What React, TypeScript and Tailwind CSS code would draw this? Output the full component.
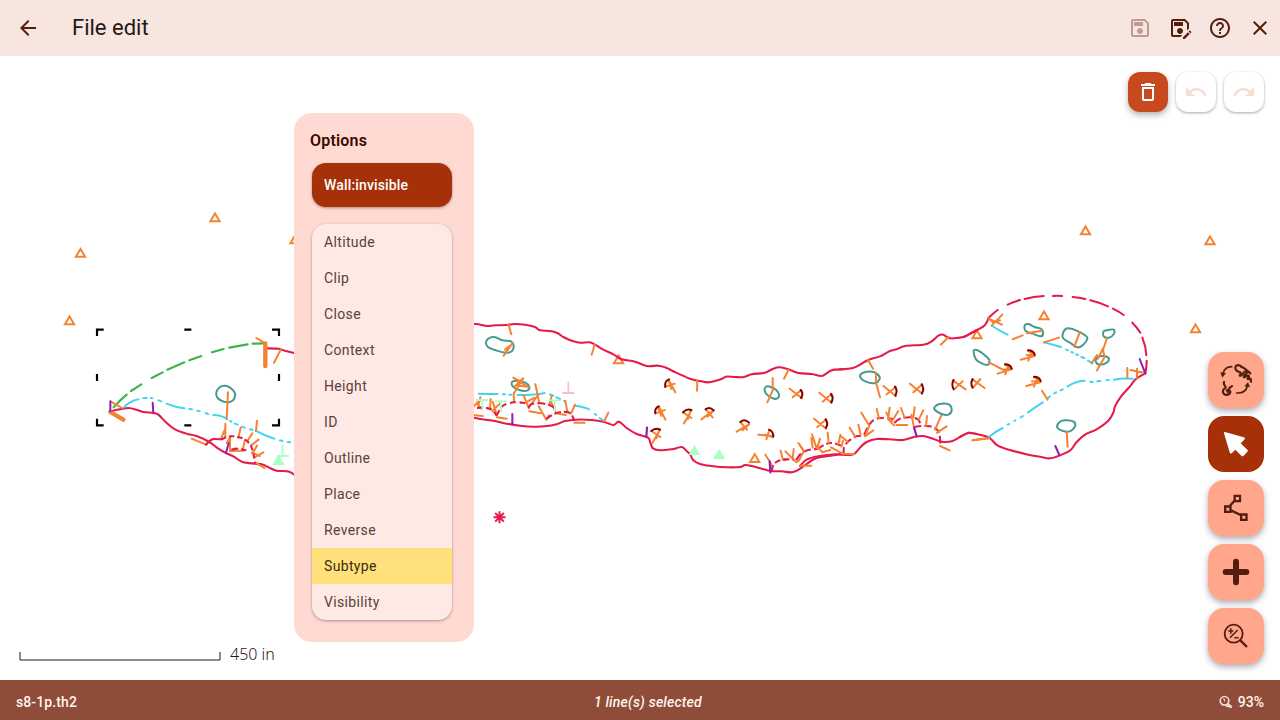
import type { ReactNode } from "react";
import {
  MdArrowBack,
  MdClose,
  MdDeleteOutline,
  MdHelpOutline,
  MdOutlineSave,
  MdOutlineSaveAs,
  MdRedo,
  MdUndo,
} from "react-icons/md";

const WALL = "#e6194b";
const ORANGE = "#f58231";
const TEAL = "#469990";
const CYAN = "#42d4f4";
const PURPLE = "#911eb4";
const MAROON = "#800000";
const MINT = "#aaffc3";
const GREEN = "#3cb44b";
const PINK = "#fabed4";

/** Catmull-Rom spline through a "x,y x,y" list, expressed as cubic beziers. */
function spline(list: string, closed = false) {
  const p = list.split(" ").map((s) => s.split(",").map(Number));
  const n = p.length;
  const at = (i: number) => (closed ? p[(i + n) % n] : p[Math.max(0, Math.min(n - 1, i))]);
  let d = `M${p[0][0]} ${p[0][1]}`;
  for (let i = 0; i < (closed ? n : n - 1); i++) {
    const [a, b, c, e] = [at(i - 1), at(i), at(i + 1), at(i + 2)];
    d += `C${b[0] + (c[0] - a[0]) / 6} ${b[1] + (c[1] - a[1]) / 6} ${c[0] - (e[0] - b[0]) / 6} ${c[1] - (e[1] - b[1]) / 6} ${c[0]} ${c[1]}`;
  }
  return closed ? d + "Z" : d;
}

type CurveProps = { pts: string; c?: string; w?: number; dash?: string; closed?: boolean };
const Curve = ({ pts, c = WALL, w = 6.2, dash, closed }: CurveProps) => (
  <path d={spline(pts, closed)} stroke={c} strokeWidth={w} strokeDasharray={dash} strokeLinecap={dash ? "butt" : "round"} />
);
const Seg = ({ d, c = ORANGE, w = 6 }: { d: string; c?: string; w?: number }) => (
  <path d={d} stroke={c} strokeWidth={w} strokeLinecap="round" strokeLinejoin="round" />
);

/** Map sheet tile: geometry is digitised at three units per pixel. */
const Sheet = ({ x, y, children }: { x: number; y: number; children: ReactNode }) => (
  <g transform={`translate(${x} ${y}) scale(0.33333)`}>{children}</g>
);

const stations = [
  [80.5, 253.5], [215, 218], [69.5, 321], [295, 240], [618.6, 360], [754.7, 458.7],
  [977, 335], [1044, 316], [1085.5, 231], [1210, 241], [1195.5, 329],
];

function CaveMap() {
  return (
    <svg className="block h-full w-full" viewBox="0 56 1280 624" fill="none">
      <g stroke={ORANGE} strokeWidth="2">
        {stations.map(([x, y]) => (
          <path key={x} d={`M${x} ${y - 4.6}L${x + 4.6} ${y + 3.2}H${x - 4.6}Z`} />
        ))}
      </g>

      <Sheet x={0} y={180}>
        <Curve pts="331,694 360,688 385,684 410,689 430,696 460,699 475,704 500,729 525,748 560,761 590,768 628,786 655,806 678,819 700,829 728,846 765,851 785,853 810,864 830,872 868,875 890,890" />
        <Curve pts="796,505 835,506 850,511 890,521" />
        <Seg c={CYAN} d="M372 682Q390 663 415 658M430 654H440M452 654L457 655M475 661L484 664M500 671Q525 682 553 685M568 687L576 688M592 692L599 694M617 699L624 702M640 705Q665 705 682 718M690 723L694 725M704 731L713 734M726 740L734 743M750 748L758 750M768 753Q795 768 823 776M840 781L847 783M863 786L871 787" />
        <Seg c={GREEN} w={6.4} d="M341 682Q360 660 380 644M393 633L424 613M455 594L488 577M502 569L553 547M568 541L604 528M636 517L671 507M688 503L743 493M758 491L795 490" />
        <Curve c={TEAL} w={6} closed pts="660,621 676,617 690,623 703,636 705,648 700,660 684,667 666,663 652,653 649,637" />
        <Seg d="M684 637L680 714M333 665L366 684M769 474L792 488M843 508L822 548M575 776L618 794L628 784M771 722L768 753M722 743L715 773M676 731L676 770M662 778L675 748M735 779L728 809M692 769L680 789M690 770L690 813L730 812M757 760L742 783M776 779L753 796M771 797L760 817M790 817L766 831M755 818L779 828M767 848L793 864" />
        <Seg w={13} d="M331 696L370 719M796 490L796 558" />
        <Seg c={PURPLE} w={6} d="M331 694V664M458 668L460 699M678 819L686 789" />
        <Curve pts="618,794 630,782 642,777 662,778" />
        <Curve pts="664,779 680,771 705,769 732,777 751,794 760,820 765,851" dash="16 9" />
        <Curve pts="694,809 711,806 739,811" dash="22 8" />
        <Seg c={MINT} w={5.4} d="M848 797V828M833 828H865" />
        <path d="M835 823L854 855H817Z" fill={MINT} />
        <g stroke="#000" strokeWidth="6.5">
          <path d="M291 468V449H311M816 449H837V468M291 716V736H311M816 736H837V716M553 449H574M553 736H574M291 582V603M837 582V603" />
        </g>
      </Sheet>

      <Sheet x={470} y={300}>
        <Curve pts="0,70 25,73 50,78 75,76 110,75 132,72 165,74 195,81 210,91 240,93 262,99 280,111 305,122 330,128 358,127 375,134 400,149 430,163 455,178 495,185 530,198 565,197 585,202 610,214" />
        <Curve pts="0,350 35,358 70,362 110,371 150,377 190,380 225,379 260,373 285,363 320,359 365,360 400,365 430,375 447,365 470,384 500,402 534,413 541,428 549,445 570,451 612,447" />
        <Curve c={TEAL} w={6} closed pts="62,112 77,112 97,121 123,124 131,137 126,153 110,158 78,151 53,140 49,123" />
        <Curve c={TEAL} w={6} closed pts="126,246 142,242 166,248 178,261 171,272 150,271 129,260" />
        <Seg c={CYAN} d="M-10 282H5M26 281Q55 283 83 282M99 283H105M118 284H124M142 285Q190 286 224 279M240 283L250 287M259 292L270 297M282 303L287 304M314 317Q342 320 357 328M374 342L379 345M389 354L397 359" />
        <Seg d="M115 73L124 103M128 129L101 167M127 132L105 149M374 134L365 164M415 338L403 363M315 314L303 341M313 368H344M130 233L176 262M160 235L131 281L132 306M145 240L143 258M135 258L158 236M146 257L174 260M196 253L208 309M205 284L176 323M161 286L170 309M192 294L165 309M170 310L177 324M206 319L229 359L237 346M178 334L212 340M245 288L238 314M242 302L258 340L287 345M286 304L292 334M80 352L110 356M62 297L60 326M68 305L80 344M90 310L67 333M20 310L34 326M31 292L25 318M0 344L38 348M5 326L29 300" />
        <Curve pts="-5,331 15,325 42,323 65,329 80,347" dash="18 9" />
        <Curve pts="80,347 98,318 132,307 165,309" dash="18 11" />
        <Curve pts="175,324 185,312 215,310 245,318 262,331" dash="24 9" />
        <Curve pts="229,357 250,343 275,336 300,339 312,359" dash="20 9" />
        <Seg c={MINT} d="M20 300H52M37 300V328M77 304H108M93 304V333M238 301H270M254 301V333" w={5.4} />
        <Seg c={PINK} d="M279 279H311M295 279V248" w={5.4} />
        <Seg c={PURPLE} d="M127 342V373" w={6} />
      </Sheet>

      <Sheet x={640} y={330}>
        <Curve pts="100,124 115,131 155,148 180,153 207,157 245,147 258,140 285,141 312,141 335,133 375,128 400,116 420,112 445,118 475,129 515,132 546,138 575,121 610,118" />
        <Curve pts="102,357 125,351 139,362 151,374 160,391 180,402 220,409 260,412 300,411 315,405 335,408 365,416 392,423 425,424 455,427 472,421 500,402 525,386 560,379 600,373" />
        <Seg d="M86 150L106 187M76 170L104 161M86 153L94 177M57 229L76 269M47 250L74 240M55 235L64 258M154 242L132 280M129 247L154 264M152 242L144 267M60 299L37 339M34 303L61 321M58 300L49 325M221 241L184 268M197 238L218 262M220 243L203 260M327 283L290 305M301 276L321 299M325 285L308 301M400 319L355 314M388 300L379 328M399 322L376 314M449 176L486 205M484 180L458 202M538 188L575 218M575 191L548 215M522 266L559 296M559 268L532 291" />
        <g stroke={MAROON} strokeWidth="6" strokeLinecap="round">
          <path d="M76 171Q73 153 87 148M46 250Q43 235 56 229M129 247Q140 235 154 240M34 303Q46 292 60 299M197 238Q209 229 221 241M301 276Q314 265 327 278M387 299Q399 303 400 319M482 180Q492 192 483 204M573 192Q582 203 574 217M557 268Q566 281 558 293" />
        </g>
        <Seg d="M172 151L171 182M446 119L432 146M376 374L390 396M390 396L397 411M422 362L429 390L436 387M436 364L469 397L479 389M461 357L458 387M475 339L492 363L476 392" />
        <Curve c={TEAL} w={6} closed pts="377,171 390,170 408,179 417,193 414,204 402,206 383,196 374,182" />
        <Seg d="M398 144V181L382 217" />
        <Curve pts="395,423 401,403 420,391 445,388 460,389" dash="18 9" />
        <Curve pts="469,390 483,370 505,360 535,356" dash="24 9" />
        <Seg c={PURPLE} w={6.5} d="M21 293L19 321M389 394L391 427" />
        <path d="M163 344L181 375H146ZM237 356L256 387H219Z" fill={MINT} />
      </Sheet>

      <Sheet x={800} y={330}>
        <Curve pts="120,118 155,115 175,107 205,90 240,79 270,63 290,58 315,48 370,44 395,34 415,17 430,14 450,25 490,21 505,14 530,0" />
        <Curve pts="120,373 150,375 165,370 182,351 200,336 230,327 270,328 310,330 345,320 370,318 395,325 425,335 455,334 480,321 505,308" />
        <Curve pts="55,355 80,341 103,340 125,348" dash="18 9" />
        <Curve pts="131,373 132,352 146,333 168,319 190,316 205,288 222,269 245,264 280,267" dash="22 10" />
        <Curve pts="283,279 300,266 332,262 355,269 362,288" dash="24 9" />
        <Curve pts="342,291 365,288 390,289 410,298 419,315 421,349" dash="22 9" />
        <Curve pts="0,408 20,389 55,379 105,373 150,375" />
        <Curve c={TEAL} w={6} closed pts="183,132 200,125 221,126 239,141 233,155 219,160 196,154 182,144" />
        <Seg d="M250 168L288 198M287 171L260 193M330 161L367 191M367 163L340 187M497 178L458 151M488 154L463 177M554 174L517 148M541 147L521 171M204 90L219 116M228 128V158L240 202M446 21L422 44M426 252L405 299M184 248L208 287L195 319L220 301M230 237L237 265M269 233L264 267L282 286M259 248L270 269M295 243L275 275M303 234L314 264M289 285H322M334 254L342 291M344 232L340 262M370 241L356 269M381 258L378 288M440 289L411 308M420 348L449 361M518 331L570 324M0 346L11 363M36 313L50 355M34 324L38 353M60 326L51 355M55 352L67 367L91 360M83 308L86 339M93 352L128 371L164 372M121 314L116 339M122 318L144 336M119 333L113 342M149 293L165 319M175 284L182 315M129 333L124 350M0 407L34 407" />
        <g stroke={MAROON} strokeWidth="6" strokeLinecap="round">
          <path d="M285 170Q294 182 286 197M365 163Q374 177 366 190M461 150Q453 163 461 178M518 147Q510 160 518 173" />
        </g>
        <Curve c={TEAL} w={6} closed pts="404,231 418,222 446,223 455,240 445,254 425,252 405,240" />
        <Seg c={PURPLE} w={6.5} d="M342 292L350 319" />
      </Sheet>

      <Sheet x={960} y={280}>
        <Curve pts="10,171 25,164 52,150 75,135 86,114" />
        <Seg c={WALL} w={6.2} d="M86 113Q99 100 113 90M143 74Q161 66 180 60M194 57Q221 50 251 48M279 48Q292 46 306 48M338 51Q357 52 376 57M391 61Q419 68 444 79M459 86Q477 95 491 105M517 128Q532 143 541 158M547 173Q558 199 559 226M560 242Q560 262 556 280" />
        <Curve pts="0,470 25,459 50,462 86,472 112,496 150,510 205,524 240,530 270,535 300,526 332,510 350,486 375,464 410,448 445,422 460,398 466,377 485,347 510,319 527,298 556,280" />
        <Seg c={CYAN} d="M97 138Q121 154 143 164M252 187L303 201M318 209L324 211M334 216L339 218M349 223L354 225M364 231L373 234M384 242L397 249M87 471Q105 455 128 444M143 434L147 432M163 423L166 421M182 412L189 408M204 397L248 367M263 355L270 349M283 340L288 337M302 331L308 328M323 319Q350 302 374 302M391 305L398 306M412 304L421 303M440 301L446 300M462 299Q484 294 518 296" />
        <Curve c={TEAL} w={6} closed pts="41,212 55,212 76,227 88,240 84,254 67,251 48,238" />
        <Curve c={TEAL} w={6} closed pts="194,136 206,132 224,141 244,147 249,162 241,169 218,161 197,153" />
        <Curve c={TEAL} w={6} closed pts="323,145 356,155 382,173 369,195 352,202 333,190 309,174 311,155" />
        <Curve c={TEAL} w={6} closed pts="431,154 444,150 462,149 461,163 447,173 431,169" />
        <Curve c={TEAL} w={6} closed pts="410,234 424,228 445,233 443,246 421,254 408,247" />
        <Curve c={TEAL} w={6} closed pts="297,428 314,421 341,425 345,439 329,454 309,453 292,443" />
        <Seg d="M204 212L225 227L200 225M214 214L205 242M224 228L182 239M135 254L155 267L128 269M145 257L136 283M154 268L113 281M87 247L127 268M222 291L242 306L216 304M232 296L222 320M241 307L199 318M86 116L126 134M127 104L95 137M86 115L100 128L120 121M158 178L188 166M201 160L246 152M252 187L297 173M360 155L343 200M441 174L429 210L434 231L411 271M411 225L395 250M429 205L414 236M246 332L263 359M502 264V294M531 266V294M511 270L555 279M320 455L323 500M38 481L87 475" />
        <g stroke={MAROON} strokeWidth="6" strokeLinecap="round">
          <path d="M204 211Q220 211 224 224M135 253Q151 253 155 266M222 290Q238 290 242 303" />
        </g>
        <Seg c={PURPLE} w={6} d="M539 237L556 280M286 498L298 525" />
      </Sheet>

      <path d="M493.5 517.3H505.5M499.5 511.3V523.3M495.2 513L503.8 521.6M503.8 513L495.2 521.6" stroke={WALL} strokeWidth="2" />
    </svg>
  );
}

const options = ["Altitude", "Clip", "Close", "Context", "Height", "ID", "Outline", "Place", "Reverse", "Subtype", "Visibility"];

function OptionsPanel() {
  return (
    <div className="absolute left-[294px] top-[57px] h-[529px] w-[180px] rounded-[18px] bg-[#ffdad2] px-4 pt-4">
      <h2 className="text-[16px] font-semibold leading-6 tracking-[0.2px] text-[#3b0900]">Options</h2>
      <div className="ml-0.5 mt-[10px] flex h-11 w-[140px] items-center rounded-[14px] bg-[#a63108] px-3 text-[14px] font-medium tracking-[0.15px] text-white shadow-[0_1px_3px_rgba(0,0,0,0.35)]">
        Wall:invisible
      </div>
      <ul className="ml-0.5 mt-[17px] w-[140px] overflow-hidden rounded-[14px] bg-[#ffe9e4] shadow-[0_1px_3px_rgba(0,0,0,0.35)]">
        {options.map((o) => (
          <li
            key={o}
            className={`flex h-9 items-center px-3 text-[14px] tracking-[0.35px] ${o === "Subtype" ? "bg-[#ffe07a] text-[#3a2c10]" : "text-[#5b413b]"}`}
          >
            {o}
          </li>
        ))}
      </ul>
    </div>
  );
}

const Tool = ({ active, children }: { active?: boolean; children: ReactNode }) => (
  <button
    className={`flex size-14 items-center justify-center rounded-2xl ${
      active ? "bg-[#a63108]" : "bg-[#ffa68c] shadow-[0_3px_6px_rgba(0,0,0,0.32)]"
    }`}
  >
    {children}
  </button>
);

function Toolbar() {
  return (
    <div className="absolute bottom-4 right-4 flex flex-col gap-2">
      <Tool>
        <svg className="size-8 overflow-visible" viewBox="0 0 96 96" fill="none" stroke="#531e0d" strokeWidth="5" strokeLinecap="round">
          <path d="M35 8C22 8 12 16 9 29" />
          <path d="M1 25L18 27L7 41Z" fill="#531e0d" stroke="none" />
          <path d="M50 87C67 88 79 80 82 66" />
          <path d="M73 67L84 55L90 70Z" fill="#531e0d" stroke="none" />
          <g strokeWidth="6.500" strokeLinejoin="round">
            <path d="M64 8C56 0 46 3 46 12C46 20 54 23 61 25C65 29 59 32 59 35C64 38 68 28 73 24C79 20 83 25 79 29C73 34 69 37 72 40C77 41 80 32 86 35C90 38 80 42 83 45C87 47 89 41 92 45C95 49 90 50 93 53" />
            <path d="M64 8C72 11 79 17 91 28" />
            <path d="M12 54C8 62 19 66 17 72C8 74 6 85 12 90C19 95 29 92 31 85C32 79 25 79 27 74C28 68 35 70 36 66" />
            <path d="M20 80C23 75 27 82 24 85" />
          </g>
        </svg>
      </Tool>
      <Tool active>
        <svg className="size-8" viewBox="0 0 96 96">
          <path d="M15 12L71 28C75 29 76 32 73 35L62 46L82 65C84 67 84 69 82 71L71 83C69 85 66 85 64 83L46 65L36 75C33 78 30 77 29 73L12 16C11 13 12 11 15 12Z" fill="white" />
        </svg>
      </Tool>
      <Tool>
        <svg className="size-8" viewBox="0 0 96 96" fill="none" stroke="#531e0d" strokeWidth="7">
          <path d="M43 27L29 42M33 55L62 69" />
          <path d="M44 11.500H60V27.500H44ZM15.500 43.500H31.500V59.500H15.500ZM63.500 67.500H79.500V83.500H63.500Z" />
        </svg>
      </Tool>
      <Tool>
        <svg className="size-8" viewBox="0 0 96 96" stroke="#531e0d" strokeWidth="18" strokeLinecap="round">
          <path d="M48 17V79M17 48H79" />
        </svg>
      </Tool>
      <Tool>
        <svg className="size-8" viewBox="0 0 96 96" fill="none" stroke="#531e0d">
          <circle cx="41" cy="41" r="27" strokeWidth="5.5" />
          <path d="M61 61L81 81" strokeWidth="7" />
          <path d="M30 53L53 30M25 33H40M32.500 25V41M43 53H56" strokeWidth="4.500" />
        </svg>
      </Tool>
    </div>
  );
}

export default function App() {
  return (
    <div className="flex h-[720px] w-[1280px] flex-col overflow-hidden bg-white font-[Roboto,sans-serif]">
      <header className="flex h-14 shrink-0 items-center bg-[#f7e5df] px-4 text-[#531e0d]">
        <MdArrowBack className="size-6" />
        <h1 className="ml-8 text-[22px] leading-7 text-[#231917]">File edit</h1>
        <div className="-mr-2 ml-auto flex gap-4">
          <MdOutlineSave className="size-6 text-[#bf9c92]" />
          <MdOutlineSaveAs className="size-6" />
          <MdHelpOutline className="size-6" />
          <MdClose className="size-6" />
        </div>
      </header>

      <main className="relative min-h-0 flex-1">
        <CaveMap />
        <div className="absolute right-4 top-4 flex gap-2">
          <button className="flex size-10 items-center justify-center rounded-xl bg-[#c9491e] text-white shadow-[0_3px_6px_rgba(0,0,0,0.3)]">
            <MdDeleteOutline className="size-6" />
          </button>
          <button className="flex size-10 items-center justify-center rounded-xl bg-white text-[#f8ddd7] shadow-[0_1px_3px_rgba(0,0,0,0.35)]">
            <MdUndo className="size-6" />
          </button>
          <button className="flex size-10 items-center justify-center rounded-xl bg-white text-[#f8ddd7] shadow-[0_1px_3px_rgba(0,0,0,0.35)]">
            <MdRedo className="size-6" />
          </button>
        </div>
        <OptionsPanel />
        <Toolbar />
        <div className="absolute bottom-[14px] left-0 flex items-end">
          <svg className="mb-1 h-3 w-[230px]" viewBox="0 0 230 12" fill="none" stroke="#231917" strokeWidth="1">
            <path d="M20 2V10H220V2" />
          </svg>
          <span className="font-['Noto_Sans',sans-serif] text-[16px] font-light leading-6 text-[#1f1a19]">450 in</span>
        </div>
      </main>

      <footer className="flex h-10 shrink-0 items-center justify-between bg-[#8f4c38] px-4 pt-1 text-[14px] font-medium text-[#fff4f0]">
        <span className="tracking-[0.1px]">s8-1p.th2</span>
        <span className="italic tracking-[0.2px]">1 line(s) selected</span>
        <span className="flex items-center gap-[5px]">
          <svg className="size-[14px]" viewBox="0 0 14 14" fill="none" stroke="#f3d8ce">
            <circle cx="5.500" cy="5.800" r="4.300" strokeWidth="1.700" />
            <path d="M7 10.800L13 12" strokeWidth="2" />
            <path d="M8.500 8.500L12.500 12" strokeWidth="1.800" />
            <path d="M4 3.800Q6.500 3.500 5.500 6.500" strokeWidth="1" />
          </svg>
          93%
        </span>
      </footer>
    </div>
  );
}
